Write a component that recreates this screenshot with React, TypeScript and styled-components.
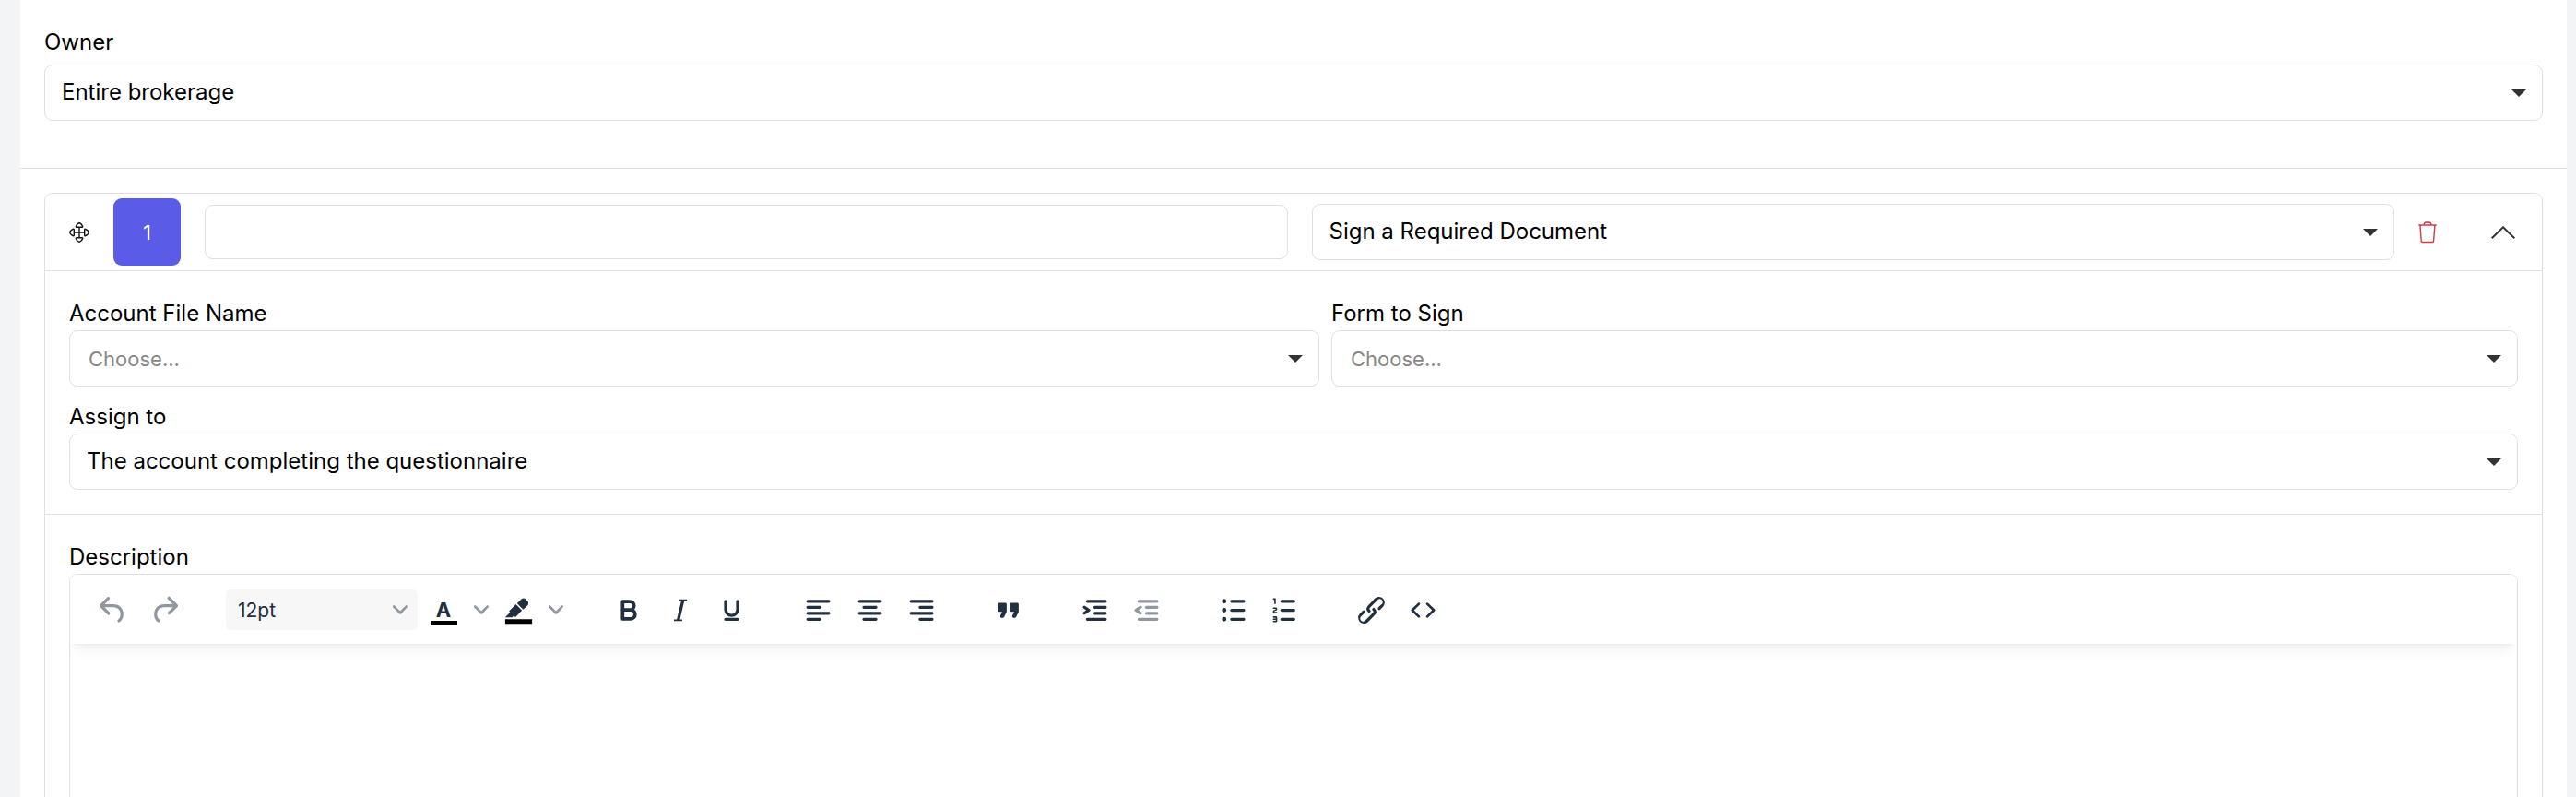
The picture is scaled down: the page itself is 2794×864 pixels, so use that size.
import React, { useId } from "react";
import styled, { createGlobalStyle } from "styled-components";

const line = "#dee0e6";
const ink = "#222f3e";

const GlobalStyle = createGlobalStyle`
  *, *::before, *::after { box-sizing: border-box; }
  body { margin: 0; background: #f3f4f6; }
  body, button, input, select, textarea { font-family: Inter, "Liberation Sans", sans-serif; }
`;

const Page = styled.main`
  display: flex;
  flex-direction: column;
  min-height: 100vh;
  margin: 0 10px 0 22px;
  background: #fff;
  color: #000;
`;

const OwnerSection = styled.section`
  padding: 28px 26px 51px;
  border-bottom: 1px solid ${line};
`;

const StepsSection = styled.section`
  flex: 1;
  display: flex;
  flex-direction: column;
  padding: 26px 26px 0;
`;

const Card = styled.article`
  flex: 1;
  display: flex;
  flex-direction: column;
  border: 1px solid ${line};
  border-bottom: 0;
  border-radius: 9px 9px 0 0;
`;

const CardHeader = styled.header`
  display: flex;
  align-items: center;
  gap: 26px;
  padding: 5px 29px 5px 26px;
  border-bottom: 1px solid ${line};
`;

const HeaderFields = styled.div`
  display: grid;
  flex: 1;
  grid-template-columns: 1fr 1fr;
  align-items: center;
  gap: 26px;
`;

const IconButton = styled.button<{ $width: number }>`
  display: flex;
  align-items: center;
  justify-content: center;
  flex: none;
  width: ${(p) => p.$width}px;
  height: 36px;
  padding: 0;
  border: 0;
  background: none;
  cursor: pointer;
`;

const CollapseButton = styled(IconButton)`
  margin-left: 33px;
`;

const StepNumber = styled.div`
  display: grid;
  place-items: center;
  flex: none;
  width: 73px;
  height: 73px;
  border-radius: 9px;
  background: #5a5be6;
  color: #fff;
  font-size: 22px;
`;

const TitleInput = styled.input`
  width: 100%;
  height: 59px;
  padding: 0 18px;
  border: 1px solid ${line};
  border-radius: 9px;
  background: #fff;
  font-size: 24px;
`;

const SelectShell = styled.div`
  display: grid;
  min-width: 0;
  align-items: center;
`;

const SelectBox = styled.select<{ $placeholder?: boolean }>`
  grid-area: 1 / 1;
  appearance: none;
  width: 100%;
  height: 61px;
  padding: ${(p) => (p.$placeholder ? "0 48px 0 20px" : "0 48px 3px 18px")};
  border: 1px solid ${line};
  border-radius: 9px;
  background: #fff;
  color: ${(p) => (p.$placeholder ? "#888" : "#000")};
  font-size: ${(p) => (p.$placeholder ? 22 : 24)}px;
`;

const Caret = styled.svg`
  grid-area: 1 / 1;
  justify-self: end;
  margin-right: 18px;
  pointer-events: none;
`;

const StepFields = styled.div`
  display: grid;
  grid-template-columns: 1356fr 1287fr;
  gap: 15px 13px;
  padding: 28px 26px 26px;
  border-bottom: 1px solid ${line};
`;

const Field = styled.div<{ $wide?: boolean; $gap?: number }>`
  display: flex;
  flex-direction: column;
  gap: ${(p) => p.$gap ?? 0}px;
  min-width: 0;
  ${(p) => p.$wide && "grid-column: 1 / -1;"}
`;

const Label = styled.label`
  font-size: 24px;
  line-height: 36px;
`;

const DescriptionSection = styled.div`
  flex: 1;
  display: flex;
  flex-direction: column;
  padding: 28px 26px 0;
`;

const Editor = styled.div`
  flex: 1;
  display: flex;
  flex-direction: column;
  border: 1px solid ${line};
  border-bottom: 0;
  border-radius: 9px 9px 0 0;
  overflow: hidden;
`;

const Toolbar = styled.div`
  position: relative;
  display: flex;
  align-items: center;
  gap: 38px;
  height: 75px;
  padding: 1px 18px 0;
  background: #fff;
  box-shadow: 0 3px 3px -3px rgba(34, 47, 62, 0.1), 0 13px 13px -7px rgba(34, 47, 62, 0.07);
`;

const Group = styled.div`
  display: flex;
  align-items: center;
`;

const ToolButton = styled.button<{ $narrow?: boolean }>`
  display: flex;
  align-items: center;
  justify-content: center;
  width: ${(p) => (p.$narrow ? 25 : 56)}px;
  height: 44px;
  padding: 0;
  border: 0;
  background: none;
  color: ${(p) => (p.$narrow ? "#9097a0" : ink)};
  cursor: pointer;

  &:disabled {
    color: #9097a0;
    cursor: default;
  }
`;

const ColorSwatch = styled.span`
  display: flex;
  flex-direction: column;
  align-items: center;
  width: 29px;
  padding-top: 4px;
  border-bottom: 5px solid #000;
  font-size: 22px;
  font-weight: 700;
  line-height: 24px;
`;

const SizeShell = styled.div`
  display: grid;
  align-items: center;
  width: 209px;
  padding-left: 1px;
  color: #9097a0;
`;

const SizeSelect = styled.select`
  grid-area: 1 / 1;
  appearance: none;
  width: 100%;
  height: 44px;
  padding: 0 44px 0 13px;
  border: 0;
  border-radius: 5px;
  background: #f7f7f7;
  color: ${ink};
  font-size: 21px;
`;

const SizeChevron = styled.span`
  grid-area: 1 / 1;
  justify-self: end;
  display: flex;
  margin-right: 11px;
  pointer-events: none;
`;

const EditorBody = styled.textarea`
  flex: 1;
  width: 100%;
  min-height: 120px;
  padding: 24px;
  border: 0;
  outline: 0;
  resize: none;
  background: #fff;
  font-size: 24px;
`;

type DropdownProps = { id?: string; value: string; placeholder?: boolean; label?: string };

const Dropdown = ({ id, value, placeholder, label }: DropdownProps) => (
  <SelectShell>
    <SelectBox id={id} aria-label={label} $placeholder={placeholder} defaultValue={value}>
      <option>{value}</option>
    </SelectBox>
    <Caret width="16" height="8" viewBox="0 0 16 8" aria-hidden="true">
      <path d="M0 0h16L8 8z" fill="#333" />
    </Caret>
  </SelectShell>
);

type LabeledSelectProps = { label: string; value: string; placeholder?: boolean; wide?: boolean; gap?: number };

const LabeledSelect = ({ label, value, placeholder, wide, gap }: LabeledSelectProps) => {
  const id = useId();
  return (
    <Field $wide={wide} $gap={gap}>
      <Label htmlFor={id}>{label}</Label>
      <Dropdown id={id} value={value} placeholder={placeholder} />
    </Field>
  );
};

const Chevron = () => (
  <svg width="16" height="16" viewBox="0 0 10 10" fill="currentColor" aria-hidden="true">
    <path d="M8.7 2.2c.3-.3.8-.3 1 0 .4.4.4.9 0 1.2L5.7 7.8c-.3.3-.9.3-1.2 0L.2 3.4a.8.8 0 0 1 0-1.2c.3-.3.8-.3 1.1 0L5 6l3.7-3.8Z" />
  </svg>
);

const longBar = "h14c.6 0 1 .4 1 1s-.4 1-1 1H5a1 1 0 1 1 0-2Z";
const dentBars =
  "M7 5h12c.6 0 1 .4 1 1s-.4 1-1 1H7a1 1 0 1 1 0-2Zm5 4h7c.6 0 1 .4 1 1s-.4 1-1 1h-7a1 1 0 0 1 0-2Zm0 4h7c.6 0 1 .4 1 1s-.4 1-1 1h-7a1 1 0 0 1 0-2Zm-5 4h12a1 1 0 0 1 0 2H7a1 1 0 0 1 0-2Z";
const bars = (x: number, rows: number[]) =>
  rows.map((y) => `M${x} ${y}h8c.6 0 1 .4 1 1s-.4 1-1 1h-8a1 1 0 1 1 0-2Z`).join("");
const aligned = (x: number) => `M5 5${longBar}M5 13${longBar}${bars(x, [9, 17])}`;

const icons: Record<string, string> = {
  undo: "M6.4 8H12c3.7 0 6.2 2 6.8 5.1.6 2.7-.4 5.6-2.3 6.8a1 1 0 0 1-1-1.8c1.1-.6 1.8-2.7 1.4-4.6-.5-2.1-2.1-3.5-4.9-3.5H6.4l3.3 3.3a1 1 0 1 1-1.4 1.4l-5-5a1 1 0 0 1 0-1.4l5-5a1 1 0 0 1 1.4 1.4L6.4 8Z",
  redo: "M17.6 10H12c-2.8 0-4.4 1.4-4.9 3.5-.4 2 .3 4 1.4 4.6a1 1 0 1 1-1 1.8c-2-1.2-2.9-4.1-2.3-6.8.6-3 3-5.1 6.8-5.1h5.6l-3.3-3.3a1 1 0 1 1 1.4-1.4l5 5a1 1 0 0 1 0 1.4l-5 5a1 1 0 0 1-1.4-1.4l3.3-3.3Z",
  alignLeft: aligned(5),
  alignCenter: aligned(8),
  alignRight: aligned(11),
  quote: "M7.5 17h.9c.4 0 .7-.2.9-.6L11 13V8c0-.6-.4-1-1-1H6a1 1 0 0 0-1 1v4c0 .6.4 1 1 1h2l-1.3 2.7a1 1 0 0 0 .8 1.3Zm8 0h.9c.4 0 .7-.2.9-.6L19 13V8c0-.6-.4-1-1-1h-4a1 1 0 0 0-1 1v4c0 .6.4 1 1 1h2l-1.3 2.7a1 1 0 0 0 .8 1.3Z",
  indent: `${dentBars}m-2.6-3.8L6.2 12l-1.8-1.2a1 1 0 0 1 1.2-1.6l3 2a1 1 0 0 1 0 1.6l-3 2a1 1 0 1 1-1.2-1.6Z`,
  outdent: `${dentBars}m1.6-3.8a1 1 0 0 1-1.2 1.6l-3-2a1 1 0 0 1 0-1.6l3-2a1 1 0 0 1 1.2 1.6L6.8 12l1.8 1.2Z`,
  bullets: `${bars(11, [5, 11, 17])}M4.5 6a1.5 1.5 0 1 0 3 0 1.5 1.5 0 1 0-3 0ZM4.5 12a1.5 1.5 0 1 0 3 0 1.5 1.5 0 1 0-3 0ZM4.5 18a1.5 1.5 0 1 0 3 0 1.5 1.5 0 1 0-3 0Z`,
  numbers: `${bars(10, [5, 11, 17])}M6 4v3.5c0 .3-.2.5-.5.5a.5.5 0 0 1-.5-.5V5h-.5a.5.5 0 0 1 0-1H6Zm-1 8.800.2.200h1.300c.3 0 .5.200.5.500s-.2.500-.5.500H4.900a1 1 0 0 1-.9-1V13c0-.4.300-.8.600-1l1.200-.4.200-.3a.2.2 0 0 0-.2-.2H4.500a.5.5 0 0 1-.5-.5c0-.3.200-.5.500-.5h1.600c.5 0 .9.400.9 1v.1c0 .4-.3.800-.6 1l-1.200.4-.2.300ZM7 17v2c0 .6-.4 1-1 1H4.500a.5.5 0 0 1 0-1h1.200c.2 0 .3-.1.3-.3 0-.2-.1-.3-.3-.3H4.400a.4.4 0 1 1 0-.8h1.300c.2 0 .3-.1.3-.3 0-.2-.1-.3-.3-.3H4.500a.5.5 0 1 1 0-1H6c.6 0 1 .4 1 1Z`,
  link: "M6.2 12.3a1 1 0 0 1 1.4 1.4l-2 2a2 2 0 1 0 2.6 2.8l4.8-4.8a1 1 0 0 0 0-1.4 1 1 0 1 1 1.4-1.3 2.9 2.9 0 0 1 0 4L9.6 20a3.9 3.9 0 0 1-5.5-5.5l2-2Zm11.6-.6a1 1 0 0 1-1.4-1.4l2-2a2 2 0 1 0-2.6-2.8L11 10.3a1 1 0 0 0 0 1.4A1 1 0 1 1 9.600 13a2.900 2.900 0 0 1 0-4L14.400 4a3.900 3.900 0 0 1 5.500 5.500l-2 2Z",
  code: "M9.8 15.7c.3.3.3.8 0 1-.3.4-.9.4-1.2 0l-4.4-4.1a.8.8 0 0 1 0-1.2l4.4-4.2c.3-.3.9-.3 1.2 0 .3.3.3.8 0 1.1L6 12l3.8 3.7ZM14.2 15.7c-.3.3-.3.8 0 1 .4.4.9.4 1.2 0l4.4-4.1c.3-.3.3-.9 0-1.2l-4.4-4.2a.8.8 0 0 0-1.2 0c-.3.3-.3.8 0 1.1L18 12l-3.8 3.7Z",
};

const Tool = ({ icon, label, disabled }: { icon: string; label: string; disabled?: boolean }) => (
  <ToolButton type="button" aria-label={label} disabled={disabled}>
    <svg width="39" height="39" viewBox="0 0 24 24" fill="currentColor" aria-hidden="true">
      <path d={icons[icon]} />
    </svg>
  </ToolButton>
);

const StrokeTool = ({ label, children }: { label: string; children: React.ReactNode }) => (
  <ToolButton type="button" aria-label={label}>
    <svg width="39" height="39" viewBox="0 0 24 24" fill="none" stroke="currentColor" strokeWidth="2" aria-hidden="true">
      {children}
    </svg>
  </ToolButton>
);

const MoveIcon = () => (
  <svg width="22" height="22" viewBox="0 0 22 22" fill="none" stroke="#111" strokeWidth="1.4" strokeLinejoin="round" aria-hidden="true">
    <path d="M11 5v12M5 11h12" />
    {[0, 90, 180, 270].map((a) => (
      <path key={a} transform={`rotate(${a} 11 11)`} d="M7.4 4.2C8.2 2.6 9.6.8 11 .8s2.8 1.8 3.6 3.4c.3.7-.1 1.1-.7 1.1H8.1c-.6 0-1-.4-.7-1.1Z" />
    ))}
  </svg>
);

const TrashIcon = () => (
  <svg width="20" height="24" viewBox="0 0 20 24" fill="none" stroke="#cf3c46" strokeWidth="1.4" aria-hidden="true">
    <path d="M.3 4h19.400M1.900 4l1.300 17.200c.1.900.7 1.300 1.500 1.300h10.400c.8 0 1.400-.4 1.500-1.300L17.900 4M6 3.800C6.300 1.800 7 1 8.500 1h3c1.500 0 2.200.8 2.500 2.800" />
  </svg>
);

export default function App() {
  const descriptionId = useId();
  return (
    <>
      <GlobalStyle />
      <Page>
        <OwnerSection>
          <LabeledSelect label="Owner" value="Entire brokerage" gap={6} />
        </OwnerSection>
        <StepsSection>
          <Card>
            <CardHeader>
              <IconButton type="button" aria-label="Move step" $width={22}>
                <MoveIcon />
              </IconButton>
              <StepNumber>1</StepNumber>
              <HeaderFields>
                <TitleInput type="text" aria-label="Step title" />
                <Dropdown label="Step type" value="Sign a Required Document" />
              </HeaderFields>
              <IconButton type="button" aria-label="Delete step" $width={20}>
                <TrashIcon />
              </IconButton>
              <CollapseButton type="button" aria-label="Collapse step" $width={26}>
                <svg width="26" height="14" viewBox="0 0 26 14" fill="none" stroke="#333" strokeWidth="2" aria-hidden="true">
                  <path d="M.7 13.300 13 1.300l12.300 12" />
                </svg>
              </CollapseButton>
            </CardHeader>
            <StepFields>
              <LabeledSelect label="Account File Name" value="Choose..." placeholder />
              <LabeledSelect label="Form to Sign" value="Choose..." placeholder />
              <LabeledSelect label="Assign to" value="The account completing the questionnaire" wide />
            </StepFields>
            <DescriptionSection>
              <Label htmlFor={descriptionId}>Description</Label>
              <Editor>
                <Toolbar role="toolbar" aria-label="Formatting">
                  <Group>
                    <Tool icon="undo" label="Undo" disabled />
                    <Tool icon="redo" label="Redo" disabled />
                  </Group>
                  <Group>
                    <SizeShell>
                      <SizeSelect aria-label="Font size" defaultValue="12pt">
                        <option>12pt</option>
                      </SizeSelect>
                      <SizeChevron>
                        <Chevron />
                      </SizeChevron>
                    </SizeShell>
                    <ToolButton type="button" aria-label="Text color">
                      <ColorSwatch>A</ColorSwatch>
                    </ToolButton>
                    <ToolButton type="button" aria-label="Text color menu" $narrow>
                      <Chevron />
                    </ToolButton>
                    <ToolButton type="button" aria-label="Background color">
                      <svg width="39" height="39" viewBox="0 0 24 24" fill="currentColor" aria-hidden="true">
                        <path d="M3 18h18v3H3z" fill="#000" />
                        <path d="M7.700 16.700H3l3.300-3.300-.7-.8L10.200 8l4 4.100-4 4.200c-.2.200-.6.200-.8 0l-.6-.7-1.100 1.100zm5-7.500L11 7.400l3-2.900a2 2 0 0 1 2.600 0L18 6c.7.700.7 2 0 2.700l-2.900 2.900-1.800-1.800-.5-.6" />
                      </svg>
                    </ToolButton>
                    <ToolButton type="button" aria-label="Background color menu" $narrow>
                      <Chevron />
                    </ToolButton>
                  </Group>
                  <Group>
                    <StrokeTool label="Bold">
                      <path strokeWidth="2.300" strokeLinejoin="round" d="M8.200 6.200h4.800a2.800 2.800 0 0 1 0 5.600H8.200zM8.200 11.800h5.300a3 3 0 0 1 0 6H8.200z" />
                    </StrokeTool>
                    <StrokeTool label="Italic">
                      <path strokeWidth="1" d="M11.200 5.300h5.500M8 18.700h5.500" />
                      <path d="M14 5.300l-3.200 13.400" />
                    </StrokeTool>
                    <StrokeTool label="Underline">
                      <path strokeLinecap="round" d="M8 6v5.500a4 4 0 0 0 8 0V6M8 18h8" />
                    </StrokeTool>
                  </Group>
                  <Group>
                    <Tool icon="alignLeft" label="Align left" />
                    <Tool icon="alignCenter" label="Align center" />
                    <Tool icon="alignRight" label="Align right" />
                  </Group>
                  <Group>
                    <Tool icon="quote" label="Blockquote" />
                  </Group>
                  <Group>
                    <Tool icon="indent" label="Increase indent" />
                    <Tool icon="outdent" label="Decrease indent" disabled />
                  </Group>
                  <Group>
                    <Tool icon="bullets" label="Bullet list" />
                    <Tool icon="numbers" label="Numbered list" />
                  </Group>
                  <Group>
                    <Tool icon="link" label="Insert link" />
                    <Tool icon="code" label="Source code" />
                  </Group>
                </Toolbar>
                <EditorBody id={descriptionId} />
              </Editor>
            </DescriptionSection>
          </Card>
        </StepsSection>
      </Page>
    </>
  );
}
